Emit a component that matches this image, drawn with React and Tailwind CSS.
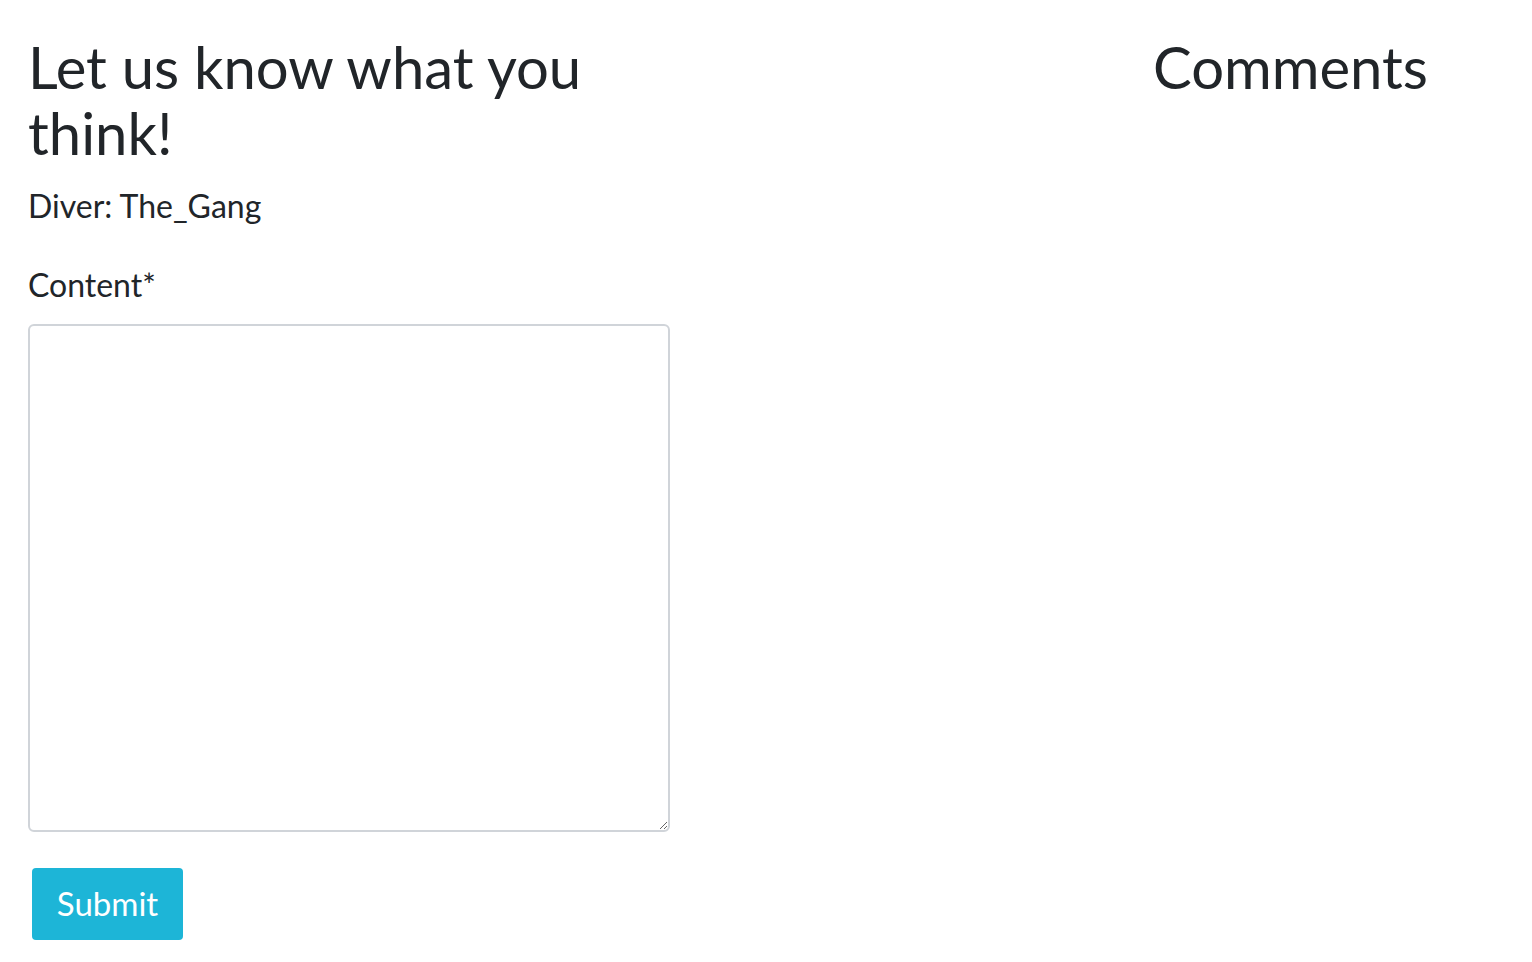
import React, { useState } from 'react';

const App = () => {
  const [content, setContent] = useState('');

  return (
    <div className="min-h-screen bg-white text-[#212529] font-['Lato',sans-serif]">
      <div className="flex px-[28px] pt-[34px]">
        {/* Form */}
        <div className="w-[642px] shrink-0">
          <h1 className="text-[58px] leading-[66px] font-normal">Let us know what you think!</h1>
          <p className="mt-[20px] text-[32px] leading-[40px]">Diver: The_Gang</p>
          <form
            className="mt-[39px]"
            onSubmit={(e) => {
              e.preventDefault();
            }}
          >
            <label htmlFor="content" className="block text-[32px] leading-[40px]">
              Content*
            </label>
            <textarea
              id="content"
              value={content}
              onChange={(e) => setContent(e.target.value)}
              className="mt-[19px] block w-[642px] h-[508px] border-2 border-[#d0d4d9] rounded-[6px] p-3 outline-none"
            />
            <button
              type="submit"
              className="mt-[36px] ml-[4px] w-[151px] h-[72px] rounded-[4px] bg-[#1db5d7] text-white text-[33px]"
            >
              Submit
            </button>
          </form>
        </div>

        {/* Comments */}
        <div className="ml-[483px]">
          <h2 className="text-[58px] leading-[66px] font-normal">Comments</h2>
        </div>
      </div>
    </div>
  );
};

export default App;
